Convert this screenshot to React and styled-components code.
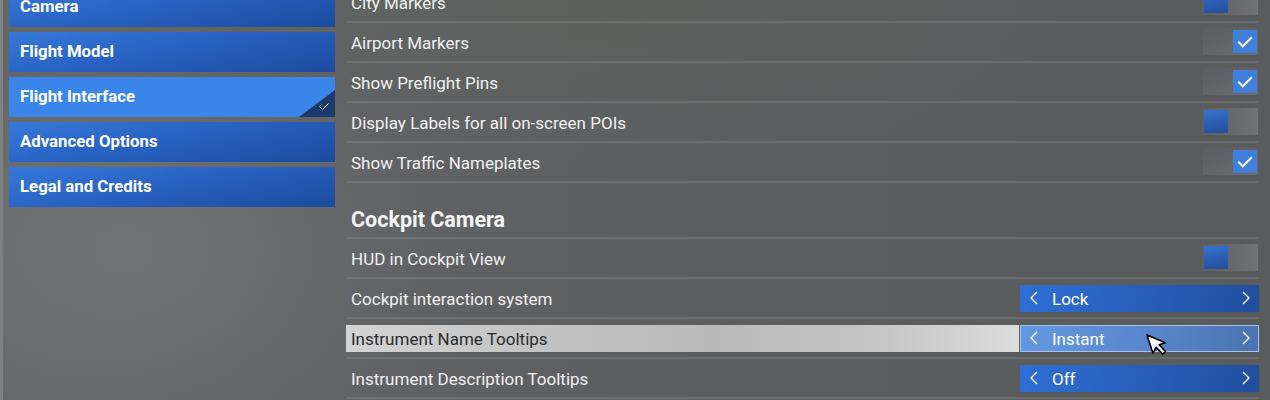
import React from "react";
import styled, { createGlobalStyle } from "styled-components";

const Global = createGlobalStyle`
  html, body { margin: 0; padding: 0; background: #5f6062; }
  body { font-family: Roboto, "Liberation Sans", sans-serif; }
  * { box-sizing: border-box; }
`;

const Page = styled.div`
  position: relative;
  width: 1270px;
  height: 400px;
  overflow: hidden;
  display: flex;
  background:
    radial-gradient(ellipse 420px 300px at 130px 250px, rgba(140,142,144,0.35), rgba(140,142,144,0) 70%),
    radial-gradient(ellipse 600px 200px at 600px 0px, rgba(90,100,90,0.5), rgba(90,100,90,0) 80%),
    linear-gradient(90deg, #646668 0%, #616264 30%, #5c5d5f 60%, #5a5b5d 100%);
`;

const Strip = styled.div`
  width: 3px;
  flex: none;
  background: #7e8082;
`;

const Sidebar = styled.nav`
  width: 332px;
  flex: none;
  padding-left: 6px;
  margin-top: -13px;
  display: flex;
  flex-direction: column;
  gap: 5px;
`;

const NavItem = styled.div`
  position: relative;
  height: 40px;
  display: flex;
  align-items: center;
  padding: 0 0 2px 11px;
  color: #ffffff;
  font-weight: 700;
  font-size: 16.8px;
  background: ${(p) =>
    p.$active
      ? "#3a85e9"
      : "linear-gradient(168deg, #3679da 0%, #2862c2 45%, #1c4b9d 100%)"};
  overflow: hidden;
`;

const Corner = styled.div`
  position: absolute;
  right: 0;
  bottom: 0;
  width: 36px;
  height: 27px;
  background: #1c3a6c;
  clip-path: polygon(100% 0, 100% 100%, 0 100%);
  display: flex;
  align-items: flex-end;
  justify-content: flex-end;
  padding: 0 5px 6px 0;
`;

const Main = styled.div`
  width: 913px;
  margin-left: 11px;
  margin-top: -17px;
  display: flex;
  flex-direction: column;
`;

const Row = styled.div`
  height: 40px;
  display: flex;
  align-items: center;
  border-bottom: 2px solid rgba(255, 255, 255, 0.09);
`;

const Label = styled.div`
  flex: 1;
  height: 27px;
  display: flex;
  align-items: center;
  padding: 2px 0 0 5px;
  font-size: 17px;
  color: ${(p) => (p.$hover ? "#2b2c2e" : "#f0f0f0")};
  background: ${(p) =>
    p.$hover
      ? "linear-gradient(90deg, #d3d3d3 0%, #c2c2c2 30%, #b9b9b9 55%, #c6c6c6 80%, #dcdcdc 100%)"
      : "transparent"};
`;

const Heading = styled.div`
  height: 56px;
  display: flex;
  align-items: flex-end;
  padding: 0 0 5px 5px;
  font-size: 21.5px;
  font-weight: 700;
  color: #f4f4f4;
  border-bottom: 2px solid rgba(255, 255, 255, 0.09);
`;

const Toggle = styled.div`
  width: 55px;
  height: 27px;
  margin: -1px 1px 0 0;
  display: flex;
  align-items: center;
  justify-content: ${(p) => (p.$on ? "flex-end" : "flex-start")};
  padding: 0 1px;
  background: ${(p) =>
    p.$on
      ? "linear-gradient(160deg, #595c64 0%, #62646a 50%, #6a6c70 100%)"
      : "linear-gradient(90deg, #5e6064 0%, #66686b 50%, #707274 100%)"};
`;

const Knob = styled.div`
  width: 24px;
  height: 23px;
  display: flex;
  align-items: center;
  justify-content: center;
  background: ${(p) =>
    p.$on
      ? "#3f7fd9"
      : "linear-gradient(170deg, #3572d0 0%, #2a5cb0 60%, #244f9c 100%)"};
`;

const Select = styled.div`
  width: 239px;
  height: 27px;
  margin-left: 1px;
  display: flex;
  align-items: center;
  color: #ffffff;
  font-size: 17px;
  padding: 0 8px 0 9px;
  background: ${(p) =>
    p.$hover
      ? "linear-gradient(100deg, #6399e2 0%, #5a8bd3 40%, #5482c4 65%, #4b72b0 100%)"
      : "linear-gradient(100deg, #2f6fd3 0%, #2962c0 40%, #2456ac 75%, #214e9e 100%)"};
  box-shadow: ${(p) => (p.$hover ? "inset 0 0 0 1px #a8c3ea" : "none")};
`;

const SelectValue = styled.span`
  flex: 1;
  padding: 2px 0 0 13px;
`;

const CursorWrap = styled.div`
  position: absolute;
  left: 1145px;
  top: 333px;
  width: 26px;
  height: 30px;
`;

const Check = ({ size = 16, w = 1.6 }) => (
  <svg width={size} height={size * 0.75} viewBox="0 0 16 12">
    <polyline points="2,6 6,10 14,2" fill="none" stroke="#fff" strokeWidth={w} />
  </svg>
);

const Chev = ({ dir }) => (
  <svg width="10" height="14" viewBox="0 0 10 14">
    <polyline
      points={dir === "l" ? "8,1 2,7 8,13" : "2,1 8,7 2,13"}
      fill="none"
      stroke="#fff"
      strokeWidth="1.4"
    />
  </svg>
);

const nav = [
  { t: "Camera" },
  { t: "Flight Model" },
  { t: "Flight Interface", active: true },
  { t: "Advanced Options" },
  { t: "Legal and Credits" },
];

const topRows = [
  { t: "City Markers", on: false },
  { t: "Airport Markers", on: true },
  { t: "Show Preflight Pins", on: true },
  { t: "Display Labels for all on-screen POIs", on: false },
  { t: "Show Traffic Nameplates", on: true },
];

const SwitchCtl = ({ on }) => (
  <Toggle $on={on}>
    <Knob $on={on}>{on && <Check size={18} w={1.8} />}</Knob>
  </Toggle>
);

const SelectCtl = ({ value, hover }) => (
  <Select $hover={hover}>
    <Chev dir="l" />
    <SelectValue>{value}</SelectValue>
    <Chev dir="r" />
  </Select>
);

export default function App() {
  return (
    <>
      <Global />
      <Page>
        <Strip />
        <Sidebar>
          {nav.map((n) => (
            <NavItem key={n.t} $active={n.active}>
              {n.t}
              {n.active && (
                <Corner>
                  <Check size={12} w={1.3} />
                </Corner>
              )}
            </NavItem>
          ))}
        </Sidebar>
        <Main>
          {topRows.map((r) => (
            <Row key={r.t}>
              <Label>{r.t}</Label>
              <SwitchCtl on={r.on} />
            </Row>
          ))}
          <Heading>Cockpit Camera</Heading>
          <Row>
            <Label>HUD in Cockpit View</Label>
            <SwitchCtl on={false} />
          </Row>
          <Row>
            <Label>Cockpit interaction system</Label>
            <SelectCtl value="Lock" />
          </Row>
          <Row>
            <Label $hover>Instrument Name Tooltips</Label>
            <SelectCtl value="Instant" hover />
          </Row>
          <Row>
            <Label>Instrument Description Tooltips</Label>
            <SelectCtl value="Off" />
          </Row>
        </Main>
        <CursorWrap>
          <svg width="26" height="30" viewBox="0 0 26 30">
            <path
              d="M2,2 L2,21 L7,16.5 L11,25 L14.5,23.5 L10.5,15 L17,15 Z"
              fill="#fff"
              stroke="#000"
              strokeWidth="1.6"
              strokeLinejoin="round"
              transform="rotate(-18 2 2)"
            />
          </svg>
        </CursorWrap>
      </Page>
    </>
  );
}
